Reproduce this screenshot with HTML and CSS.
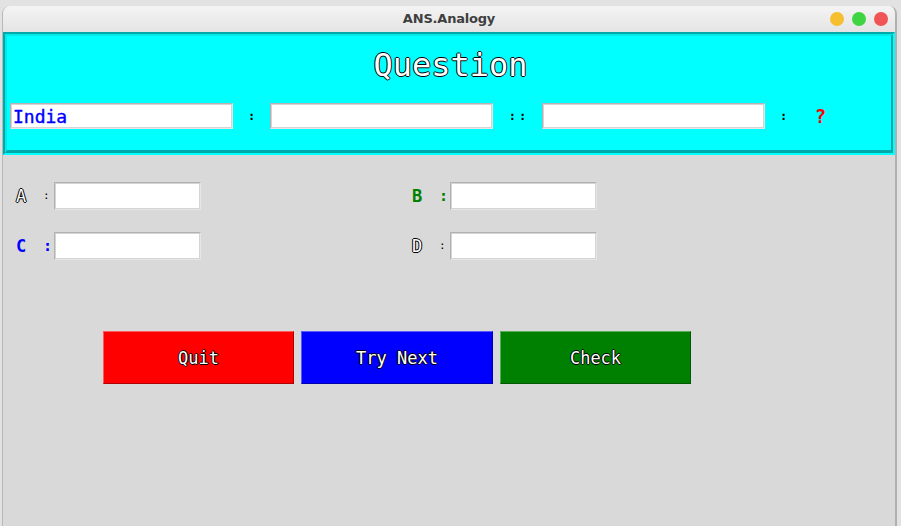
FILE: index.html
```html
<!DOCTYPE html>
<html>
<head>
<meta charset="utf-8">
<title>ANS.Analogy</title>
<link rel="stylesheet" href="styles.css">
</head>
<body>
<div class="window">
  <div class="titlebar">
    <div class="spacer"></div>
    <div class="title">ANS.Analogy</div>
    <div class="controls">
      <span class="light yellow"></span>
      <span class="light green"></span>
      <span class="light red"></span>
    </div>
  </div>
  <div class="frame">
    <div class="frame-inner">
      <div class="question">Question</div>
      <div class="analogy-row">
        <input class="entry wide india" value="India" readonly>
        <span class="sep">:</span>
        <input class="entry wide" readonly>
        <span class="sep">::</span>
        <input class="entry wide" readonly>
        <span class="sep">:</span>
        <span class="qmark">?</span>
      </div>
    </div>
  </div>
  <div class="options">
    <div class="field"><span class="label outline">A</span><span class="colon small">:</span><input class="entry option" readonly></div>
    <div class="field"><span class="label green-text">B</span><span class="colon green-text">:</span><input class="entry option" readonly></div>
    <div class="field"><span class="label blue-text">C</span><span class="colon blue-text">:</span><input class="entry option" readonly></div>
    <div class="field"><span class="label outline">D</span><span class="colon small">:</span><input class="entry option" readonly></div>
  </div>
  <div class="buttons">
    <button class="btn btn-quit">Quit</button>
    <button class="btn btn-next">Try Next</button>
    <button class="btn btn-check">Check</button>
  </div>
</div>
</body>
</html>
```

FILE: styles.css
```css
html, body {
  margin: 0;
  padding: 0;
}
body {
  background: #e2e2e2;
  width: 901px;
  height: 526px;
  overflow: hidden;
}
.window {
  margin: 6px 0 0 2px;
  width: 892px;
  height: 520px;
  border-left: 1px solid #b8b8b8;
  border-right: 2px solid #b0b0b0;
  border-radius: 8px 8px 0 0;
  background: #d9d9d9;
  overflow: hidden;
}
.titlebar {
  height: 26px;
  display: grid;
  grid-template-columns: 1fr auto 1fr;
  align-items: center;
  background: linear-gradient(#f4f4f4, #e4e4e4);
}
.title {
  font-family: "DejaVu Sans", sans-serif;
  font-weight: bold;
  font-size: 13px;
  color: #3f3f3f;
  line-height: 26px;
  letter-spacing: -0.2px;
}
.controls {
  display: flex;
  justify-content: flex-end;
  gap: 8px;
  padding-right: 7px;
}
.light {
  width: 14px;
  height: 14px;
  border-radius: 50%;
  display: block;
}
.yellow { background: #f6bf30; }
.green { background: #3ed442; }
.red { background: #f05454; }

.frame {
  height: 123px;
  box-sizing: border-box;
  border-style: solid;
  border-width: 2px;
  border-color: #00a9a9 #00ffff #00ffff #00a9a9;
  background: #00ffff;
}
.frame-inner {
  height: 100%;
  box-sizing: border-box;
  border-style: solid;
  border-width: 2px 2px 3px 2px;
  border-color: #00e8e8 #00a9a9 #00a9a9 #00e8e8;
  padding: 9px 0 0 3px;
}
.question {
  text-align: center;
  font-family: "DejaVu Sans Mono", monospace;
  font-size: 32px;
  line-height: 40px;
  color: #ffffff;
  text-shadow: 1px 0 0 #000, -1px 0 0 #000, 0 1px 0 #000, 0 -1px 0 #000;
}
.analogy-row {
  margin-top: 18px;
  display: grid;
  grid-template-columns: 223px 37px 223px 49px 223px 37px 37px;
  align-items: center;
}
.entry {
  box-sizing: border-box;
  margin: 0;
  padding: 0 2px;
  background: #ffffff;
  border-style: solid;
  border-width: 1px;
  border-color: #b2b2b2 #e6e6e6 #e6e6e6 #b2b2b2;
  box-shadow: inset 0 0 0 1px #d4d4d4;
  outline: none;
}
.wide {
  width: 223px;
  height: 26px;
}
.india {
  font-family: "DejaVu Sans Mono", monospace;
  font-size: 18px;
  color: #0000ff;
  -webkit-text-stroke: 0.4px #0000ff;
}
.sep {
  text-align: center;
  font-family: "DejaVu Sans Mono", monospace;
  font-weight: bold;
  font-size: 12px;
  letter-spacing: 3px;
  text-indent: 3px;
  color: #000;
}
.qmark {
  text-align: center;
  font-family: "DejaVu Sans Mono", monospace;
  font-weight: bold;
  font-size: 19px;
  color: #ff0000;
}
.options {
  padding: 27px 0 0 13px;
  display: grid;
  grid-template-columns: 185px 185px;
  column-gap: 211px;
  row-gap: 22px;
}
.field {
  display: flex;
  align-items: center;
}
.label {
  width: 27px;
  font-family: "DejaVu Sans Mono", monospace;
  font-size: 17px;
  line-height: 28px;
}
.colon {
  width: 11px;
  font-family: "DejaVu Sans Mono", monospace;
  font-size: 15px;
  font-weight: bold;
  line-height: 28px;
}
.colon.small {
  font-size: 11px;
  font-weight: normal;
  color: #000;
}
.outline {
  color: #ffffff;
  text-shadow: 1px 0 0 #000, -1px 0 0 #000, 0 1px 0 #000, 0 -1px 0 #000;
}
.green-text {
  color: #008000;
  font-weight: bold;
}
.blue-text {
  color: #0000ff;
  font-weight: bold;
}
.option {
  width: 147px;
  height: 28px;
}
.buttons {
  margin-top: 71px;
  padding-left: 100px;
  display: flex;
  gap: 7px;
}
.btn {
  width: 191px;
  height: 53px;
  margin: 0;
  padding: 0;
  border-style: solid;
  border-width: 1px;
  border-color: rgba(255,255,255,0.35) rgba(0,0,0,0.3) rgba(0,0,0,0.3) rgba(255,255,255,0.35);
  font-family: "DejaVu Sans Mono", monospace;
  font-size: 17px;
  color: #ffffff;
  text-shadow: 1px 0 0 #000, -1px 0 0 #000, 0 1px 0 #000, 0 -1px 0 #000;
}
.btn-quit { background: #ff0000; }
.btn-next { background: #0000ff; width: 192px; }
.btn-check { background: #008000; }
```
